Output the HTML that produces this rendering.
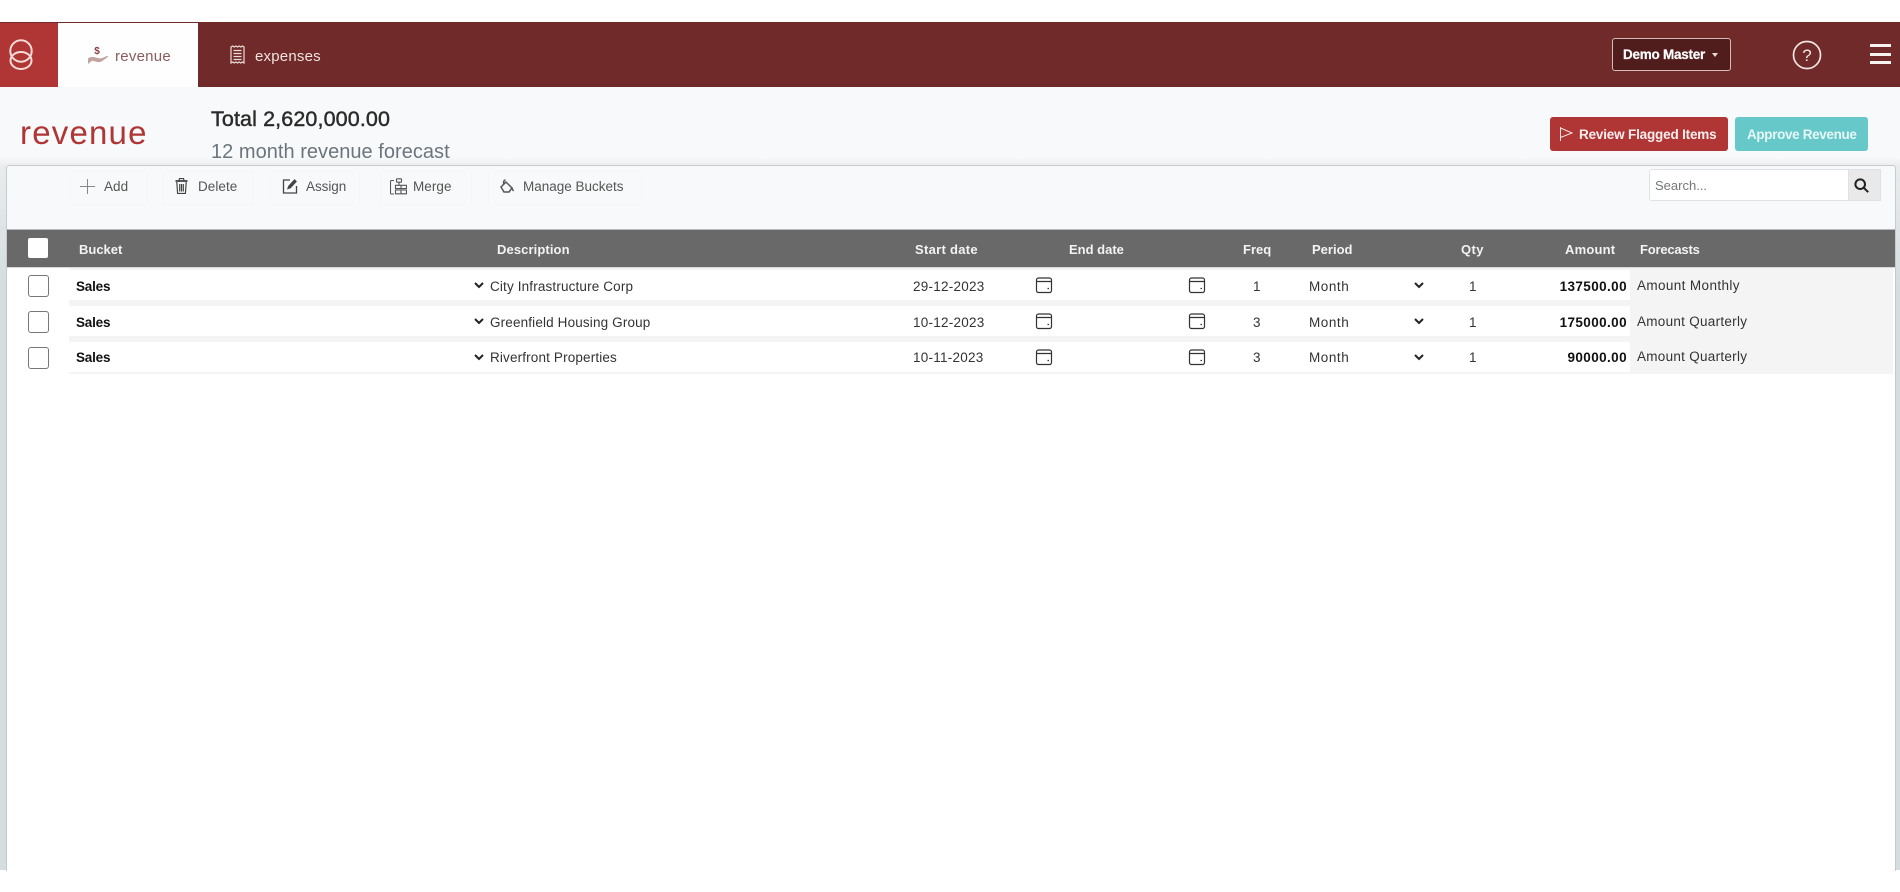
<!DOCTYPE html>
<html lang="en"><head><meta charset="utf-8"><title>revenue</title>
<style>
html,body{margin:0;padding:0;background:#fff}
body{width:1900px;height:892px;position:relative;overflow:hidden;font-family:"Liberation Sans",sans-serif;color:#333}
div,span,svg{position:absolute;display:block}
.t{white-space:nowrap;line-height:1}
.hd{color:#f3f3f3;font-weight:bold;font-size:13px;top:243px;line-height:14px;white-space:nowrap}
.c{font-size:13.5px;line-height:16px;white-space:nowrap;color:#333}
.d{letter-spacing:.15px}
.dt{letter-spacing:.25px}
.m{letter-spacing:.55px}
.am{letter-spacing:.4px;font-weight:bold;color:#111}
.f{letter-spacing:.38px}
.tb{font-size:13.5px;color:#555;top:179px;line-height:16px;white-space:nowrap;letter-spacing:.05px}
.row{left:69px;width:1561px;height:30px;background:#fff}
.cb{left:28px;width:19px;height:20px;background:#fff;border:1px solid #777;border-radius:3px;box-sizing:content-box}
.tbb{top:171px;height:32px;border:1px solid #f5f6f7;border-radius:3px}
</style></head><body>
<!-- page strip -->
<div style="left:0;top:87px;width:1900px;height:783px;background:linear-gradient(#f8f9fa 0,#f8f9fa 70px,#e9eced 80px,#d4dde0 200px,#d4dde0 100%)"></div>
<!-- header -->
<div style="left:0;top:22px;width:1900px;height:65px;background:#702a2a"></div>
<div style="left:0;top:23px;width:58px;height:64px;background:#b03535"></div>
<div style="left:58px;top:23px;width:140px;height:64px;background:#fefefe"></div>
<svg style="left:7px;top:39px" width="28" height="32" viewBox="0 0 28 32" fill="none" stroke="#f3dcd8" stroke-width="2"><circle cx="14" cy="12" r="10.700"/><ellipse cx="14" cy="21.500" rx="10.500" ry="8.500"/></svg>
<svg style="left:87px;top:44px" width="22" height="21" viewBox="0 0 22 21"><path d="M1 14.500c2-1.800 4.500-2 7-1.200l4 1h2.500l5.500-2.300c1-.3 1.500.5.600 1.200L14.500 17.500c-2 1-4 .8-6 0L5 16.800 1 20z" fill="#c2a5a3"/><text x="10" y="10" font-family="Liberation Sans" font-size="10" font-weight="bold" fill="#8c3c3c" text-anchor="middle">$</text></svg>
<div class="t" style="left:115px;top:49px;font-size:15px;color:#8a5c60;letter-spacing:.25px">revenue</div>
<svg style="left:230px;top:45px" width="15" height="20" viewBox="0 0 15 20" fill="none" stroke="#eadcd8" stroke-width="1.200"><path d="M1 2l1.600-1 1.600 1 1.700-1 1.600 1 1.600-1 1.700 1 1.600-1L14 2v16l-1.600-1-1.600 1-1.600-1-1.700 1-1.700-1-1.600 1-1.600-1L1 18z"/><path d="M3.500 5.500h8M3.500 8.500h8M3.500 11.500h8M3.500 14.500h8"/></svg>
<div class="t" style="left:255px;top:49px;font-size:15px;color:#f0e2df;letter-spacing:.2px">expenses</div>
<div style="left:1612px;top:38px;width:117px;height:31px;background:#511d1c;border:1px solid #d4bdb8;border-radius:3px"></div>
<div class="t" style="left:1623px;top:48px;font-size:13.500px;font-weight:bold;color:#fff;letter-spacing:-.25px;-webkit-text-stroke:.2px #fff">Demo Master</div>
<div style="left:1712px;top:53px;width:0;height:0;border-left:3.500px solid transparent;border-right:3.500px solid transparent;border-top:4px solid #e8d8d4"></div>
<svg style="left:1792px;top:40px" width="30" height="30" viewBox="0 0 30 30" fill="none" stroke="#f2e6e2" stroke-width="1.700"><circle cx="15" cy="15" r="13.500"/><text x="15" y="21" font-family="Liberation Sans" font-size="17" fill="#f2e6e2" stroke="none" text-anchor="middle">?</text></svg>
<div style="left:1870px;top:44px;width:21px;height:3px;background:#f8f3f1"></div>
<div style="left:1870px;top:53px;width:21px;height:3px;background:#f8f3f1"></div>
<div style="left:1870px;top:61px;width:21px;height:3px;background:#f8f3f1"></div>
<!-- title -->
<div class="t" style="left:20px;top:116px;font-size:33px;color:#b03535;letter-spacing:1.200px">revenue</div>
<div class="t" style="left:211px;top:109px;font-size:21.500px;color:#2b2b2b;-webkit-text-stroke:.45px #2b2b2b;letter-spacing:.12px">Total 2,620,000.00</div>
<div class="t" style="left:211px;top:142px;font-size:20px;color:#6c757d;letter-spacing:.03px">12 month revenue forecast</div>
<div style="left:1550px;top:117px;width:178px;height:34px;background:#b03535;border-radius:3px"></div>
<svg style="left:1559px;top:126px" width="15" height="16" viewBox="0 0 15 16" fill="none" stroke="#f5e4e2" stroke-width="1"><path d="M1.500 1v14M1.500 2l11.500 5-11.500 4.500"/></svg>
<div class="t" style="left:1579px;top:128px;font-size:13.500px;font-weight:bold;color:#fbeeee;letter-spacing:-.18px">Review Flagged Items</div>
<div style="left:1735px;top:117px;width:133px;height:34px;background:#66c8c8;border-radius:3px"></div>
<div class="t" style="left:1747px;top:128px;font-size:13.500px;font-weight:bold;color:#e8f8f8;letter-spacing:-.35px">Approve Revenue</div>
<!-- panel -->
<div style="left:6px;top:165px;width:1888px;height:705px;background:#fff;border:1px solid #c6cacd;border-bottom:0;border-radius:3px 3px 0 0;box-sizing:content-box"></div>
<div style="left:7px;top:166px;width:1888px;height:64px;background:#f8f9fa;border-radius:3px 3px 0 0"></div>
<div class="tbb" style="left:70px;width:76px"></div><div class="tbb" style="left:163px;width:88px"></div><div class="tbb" style="left:270px;width:88px"></div><div class="tbb" style="left:380px;width:90px"></div><div class="tbb" style="left:488px;width:152px"></div>
<svg style="left:80px;top:179px" width="15" height="15" viewBox="0 0 15 15" stroke="#888" stroke-width="1"><path d="M7.500 0v15M0 7.500h15"/></svg>
<div class="tb" style="left:104px">Add</div>
<svg style="left:175px;top:178px" width="13" height="16" viewBox="0 0 13 16" fill="none" stroke="#444" stroke-width="1.200"><path d="M.5 3h12" stroke-width="1.800"/><path d="M4 2.500l.5-2h4l.5 2M1.800 4l.8 11.500h7.800L11.200 4M4.700 6v7.500M6.500 6v7.500M8.300 6v7.500"/></svg>
<div class="tb" style="left:198px">Delete</div>
<svg style="left:282px;top:178px" width="16" height="16" viewBox="0 0 16 16" fill="none" stroke="#444" stroke-width="1.300"><path d="M8 2H1.500v13h13V8"/><path d="M5.500 11l1-3L12.500 1.500l2 2L8.500 10z" fill="#444" stroke-width=".6"/></svg>
<div class="tb" style="left:306px;letter-spacing:-.05px">Assign</div>
<svg style="left:390px;top:178px" width="17" height="17" viewBox="0 0 17 17" fill="none" stroke="#555" stroke-width="1.100"><path d="M4 2.500H1.500a1 1 0 0 0-1 1V15a1 1 0 0 0 1 1H4"/><rect x="6.500" y=".8" width="5" height="3.400" rx=".6"/><path d="M9 4.200V7M5.500 7.300h11v3.300h-11zM5.500 12h11v3.800h-11zM11 7.300v3.300M11 12v3.800"/></svg>
<div class="tb" style="left:413px">Merge</div>
<svg style="left:499px;top:179px" width="16" height="15" viewBox="0 0 16 15" fill="none" stroke="#555" stroke-width="1.500"><path d="M2 8l5-5 6 6-3 4H5z"/><path d="M5 5.500C4 3 5 1 6.500 1M13 9.500l1.500 2.500"/></svg>
<div class="tb" style="left:523px;letter-spacing:0">Manage Buckets</div>
<!-- search -->
<div style="left:1649px;top:169px;width:199px;height:32px;background:#fff;border:1px solid #dee2e6;border-right:0;border-radius:3px 0 0 3px;box-sizing:border-box"></div>
<div class="t" style="left:1655px;top:179px;font-size:13px;color:#777">Search...</div>
<div style="left:1848px;top:169px;width:33px;height:32px;background:#e9e9e9;border:1px solid #dee2e6;box-sizing:border-box"></div>
<svg style="left:1854px;top:178px" width="15" height="15" viewBox="0 0 15 15" fill="none" stroke="#222" stroke-width="2"><circle cx="6.200" cy="6.200" r="4.800"/><path d="M9.800 9.800l4.400 4.400"/></svg>
<!-- table -->
<div style="left:7px;top:229px;width:1888px;height:1px;background:#b5b7b8"></div>
<div style="left:7px;top:230px;width:1888px;height:37px;background:#696969"></div>
<div style="left:7px;top:267px;width:1888px;height:1px;background:#d8d8d8"></div>
<div style="left:28px;top:238px;width:20px;height:20px;background:#fff;border-radius:2px"></div>
<div class="hd" style="left:79px">Bucket</div><div class="hd" style="left:497px;letter-spacing:.1px">Description</div><div class="hd" style="left:915px;letter-spacing:.3px">Start date</div><div class="hd" style="left:1069px">End date</div><div class="hd" style="left:1243px">Freq</div><div class="hd" style="left:1312px">Period</div><div class="hd" style="left:1461px;letter-spacing:.4px">Qty</div><div class="hd" style="left:1565px;letter-spacing:.2px">Amount</div><div class="hd" style="left:1640px;letter-spacing:-.2px">Forecasts</div>
<div style="left:69px;top:268px;width:1561px;height:106px;background:#f4f4f4"></div>
<div style="left:1630px;top:268px;width:263px;height:106px;background:#f4f4f4"></div>
<div class="row" style="top:270px"></div><div class="row" style="top:306px"></div><div class="row" style="top:342px"></div>
<div class="cb" style="top:275px"></div><div class="cb" style="top:311px"></div><div class="cb" style="top:347px"></div>
<div class="c" style="left:76px;top:279px;font-weight:bold;color:#111;letter-spacing:-.2px">Sales</div><div class="c" style="left:76px;top:315px;font-weight:bold;color:#111;letter-spacing:-.2px">Sales</div><div class="c" style="left:76px;top:350px;font-weight:bold;color:#111;letter-spacing:-.2px">Sales</div>
<svg style="left:474px;top:282px" width="10" height="7" viewBox="0 0 10 7" fill="none" stroke="#222" stroke-width="2"><path d="M1 1l4 4 4-4"/></svg>
<svg style="left:474px;top:318px" width="10" height="7" viewBox="0 0 10 7" fill="none" stroke="#222" stroke-width="2"><path d="M1 1l4 4 4-4"/></svg>
<svg style="left:474px;top:354px" width="10" height="7" viewBox="0 0 10 7" fill="none" stroke="#222" stroke-width="2"><path d="M1 1l4 4 4-4"/></svg>
<div class="c d" style="left:490px;top:279px">City Infrastructure Corp</div><div class="c d" style="left:490px;top:315px">Greenfield Housing Group</div><div class="c d" style="left:490px;top:350px">Riverfront Properties</div>
<div class="c dt" style="left:913px;top:279px">29-12-2023</div><div class="c dt" style="left:913px;top:315px">10-12-2023</div><div class="c dt" style="left:913px;top:350px">10-11-2023</div>
<svg style="left:1035px;top:276px" width="18" height="18" viewBox="0 0 18 18" fill="none" stroke="#333" stroke-width="1.200"><rect x="1.500" y="2" width="15" height="14.500" rx="2"/><path d="M1.500 5.500h15M12.500 12.500h1.500"/></svg>
<svg style="left:1188px;top:276px" width="18" height="18" viewBox="0 0 18 18" fill="none" stroke="#333" stroke-width="1.200"><rect x="1.500" y="2" width="15" height="14.500" rx="2"/><path d="M1.500 5.500h15M12.500 12.500h1.500"/></svg>
<svg style="left:1035px;top:312px" width="18" height="18" viewBox="0 0 18 18" fill="none" stroke="#333" stroke-width="1.200"><rect x="1.500" y="2" width="15" height="14.500" rx="2"/><path d="M1.500 5.500h15M12.500 12.500h1.500"/></svg>
<svg style="left:1188px;top:312px" width="18" height="18" viewBox="0 0 18 18" fill="none" stroke="#333" stroke-width="1.200"><rect x="1.500" y="2" width="15" height="14.500" rx="2"/><path d="M1.500 5.500h15M12.500 12.500h1.500"/></svg>
<svg style="left:1035px;top:348px" width="18" height="18" viewBox="0 0 18 18" fill="none" stroke="#333" stroke-width="1.200"><rect x="1.500" y="2" width="15" height="14.500" rx="2"/><path d="M1.500 5.500h15M12.500 12.500h1.500"/></svg>
<svg style="left:1188px;top:348px" width="18" height="18" viewBox="0 0 18 18" fill="none" stroke="#333" stroke-width="1.200"><rect x="1.500" y="2" width="15" height="14.500" rx="2"/><path d="M1.500 5.500h15M12.500 12.500h1.500"/></svg>
<div class="c" style="left:1253px;top:279px">1</div><div class="c" style="left:1253px;top:315px">3</div><div class="c" style="left:1253px;top:350px">3</div>
<div class="c m" style="left:1309px;top:279px">Month</div><div class="c m" style="left:1309px;top:315px">Month</div><div class="c m" style="left:1309px;top:350px">Month</div>
<svg style="left:1414px;top:282px" width="10" height="7" viewBox="0 0 10 7" fill="none" stroke="#222" stroke-width="2"><path d="M1 1l4 4 4-4"/></svg>
<svg style="left:1414px;top:318px" width="10" height="7" viewBox="0 0 10 7" fill="none" stroke="#222" stroke-width="2"><path d="M1 1l4 4 4-4"/></svg>
<svg style="left:1414px;top:354px" width="10" height="7" viewBox="0 0 10 7" fill="none" stroke="#222" stroke-width="2"><path d="M1 1l4 4 4-4"/></svg>
<div class="c" style="left:1469px;top:279px">1</div><div class="c" style="left:1469px;top:315px">1</div><div class="c" style="left:1469px;top:350px">1</div>
<div class="c am" style="right:273px;top:279px">137500.00</div><div class="c am" style="right:273px;top:315px">175000.00</div><div class="c am" style="right:273px;top:350px">90000.00</div>
<div class="c f" style="left:1637px;top:278px">Amount Monthly</div><div class="c f" style="left:1637px;top:314px;letter-spacing:.28px">Amount Quarterly</div><div class="c f" style="left:1637px;top:349px;letter-spacing:.28px">Amount Quarterly</div>
</body></html>
